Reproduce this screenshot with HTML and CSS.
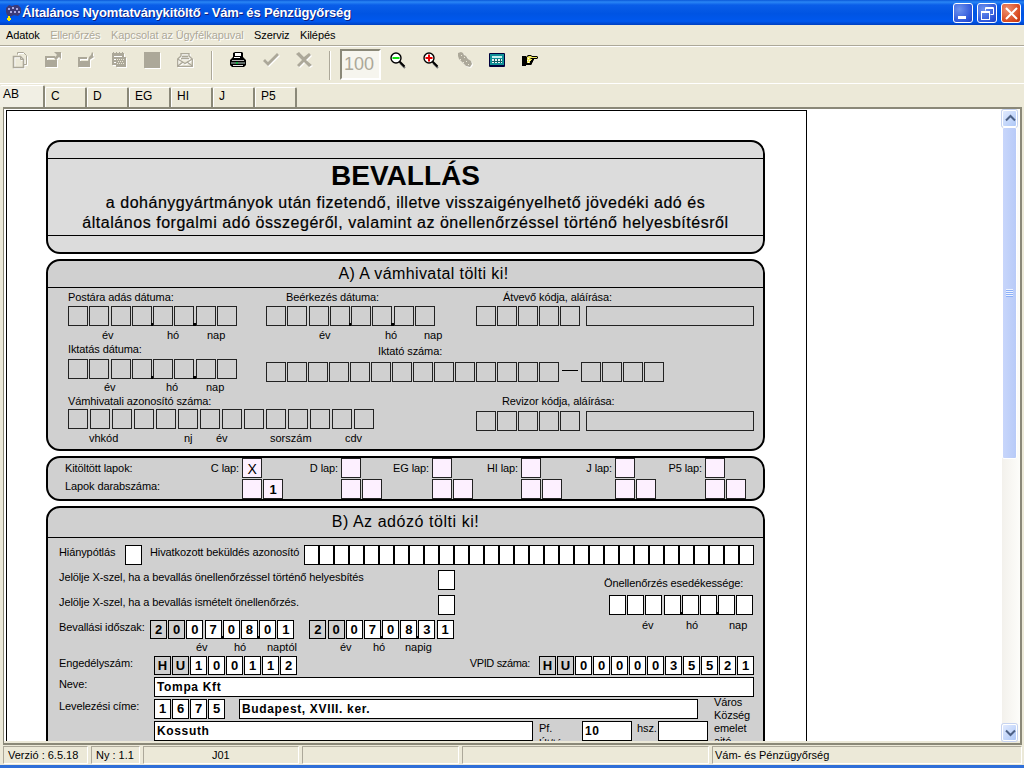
FILE: index.html
```html
<!DOCTYPE html>
<html lang="hu">
<head>
    <meta charset="UTF-8">
    <title>Általános Nyomtatványkitöltő - Vám- és Pénzügyőrség</title>
    <link rel="stylesheet" href="styles.css">
</head>
<body>
<div class="window">

    <!-- Title bar -->
    <div class="titlebar">
        <svg class="app-icon" width="17" height="17" viewBox="0 0 17 17">
            <path d="M1 4 L4 1 L7 2 L10 1 L13 1 L16 4 L16 9 L13 12 L9 11 L5 13 L2 11 L1 8 Z" fill="#3c3a78"/>
            <path d="M3 4h2v2H3zM7 3h2v2H7zM11 4h2v2h-2zM5 7h2v2H5zM9 7h2v2H9zM13 7h2v2h-2z" fill="#a9a8e0"/>
            <path d="M2 14h1v-2h2v2h1v2H5v1H3v-1H2z" fill="#ffe800"/>
        </svg>
        <span class="title-text">Általános Nyomtatványkitöltő - Vám- és Pénzügyőrség</span>
        <div class="win-buttons">
            <div class="win-btn">
                <svg width="19" height="19" viewBox="0 0 19 19"><rect x="4" y="12" width="8" height="3" fill="#fff"/></svg>
            </div>
            <div class="win-btn">
                <svg width="19" height="19" viewBox="0 0 19 19" fill="none" stroke="#fff"><path d="M7.500 6.500V3.500H15.500V10.500H12.500" /><path d="M7.500 4.500H15.500"/><rect x="3.500" y="7.500" width="8" height="8"/><path d="M3.500 8.500H11.500"/></svg>
            </div>
            <div class="win-btn win-close">
                <svg width="19" height="19" viewBox="0 0 19 19" stroke="#fff" stroke-width="2"><path d="M4 4L15 15M15 4L4 15"/></svg>
            </div>
        </div>
    </div>

    <!-- Menu -->
    <div class="menubar">
        <span>Adatok</span>
        <span class="disabled">Ellenőrzés</span>
        <span class="disabled">Kapcsolat az Ügyfélkapuval</span>
        <span>Szerviz</span>
        <span>Kilépés</span>
    </div>

    <!-- Toolbar -->
    <div class="toolbar">
        <div class="tool-group">
            <svg class="tool tool-off" viewBox="0 0 16 16" fill="none" stroke="#aca899"><path d="M5.500 2.500V.5H11.500L14.500 3.500V12.500H11.500"/><path d="M1.500 4.500H8.500L11.500 7.500V15.500H1.500Z" stroke-width="1.600"/><path d="M8.500 4.500V7.500H11.500" /></svg>
            <svg class="tool tool-off" viewBox="0 0 16 16" fill="#aca899"><path d="M0 4h10v2H2v2h8l1-1 1 1v7H0z"/><path d="M9 0h7v7l-2-2-3 3-2-2 3-3z"/></svg>
            <svg class="tool tool-off" viewBox="0 0 16 16" fill="#aca899"><path d="M0 5h9v2H2v2h8l2-2v8H0z"/><path d="M14 0l1 1v3l1 1-3 2-3 2 1-4 2-2z"/></svg>
            <svg class="tool tool-off" viewBox="0 0 16 16" fill="#aca899"><path d="M1 1h1V0h1v1h2V0h1v1h2V0h1v1h2V0h1v1h1v4h2v10H5v-2H1zM3 4v1h8V4zM3 7v1h2V7zM3 10v1h2v-1z" fill-rule="evenodd"/><path d="M6 7h1v1H6zM8 7h1v1H8zM10 7h1v1h-1zM12 7h1v1h-1zM7 9h1v1H7zM9 9h1v1H9zM11 9h1v1h-1zM6 11h1v1H6zM8 11h1v1H8zM10 11h1v1h-1zM12 11h1v1h-1z" fill="#ece9d8"/></svg>
            <svg class="tool tool-off" viewBox="0 0 16 16"><rect width="16" height="16" fill="#aca899"/></svg>
            <svg class="tool tool-off" viewBox="0 0 16 16" fill="none" stroke="#aca899" stroke-width="1.300"><path d="M.7 7L4 4V1.700H12V4L15.300 7V14.300H.7Z"/><path d="M.7 7L8 11.500L15.300 7"/><path d="M.7 14L6 10M15.300 14L10 10"/><path d="M5 4.500H11M4 6.500H12"/></svg>
        </div>
        <div class="tool-sep sep-first"></div>
        <div class="tool-group">
            <svg class="tool" viewBox="0 0 16 16"><path d="M3 1l2-1h7l1 1v4l3 3v5l-2 2H2l-2-2V8l3-3z" fill="#000"/><path d="M5 1h6v3H5zM4 5h6v1H4z" fill="#fff"/><path d="M2 8h12v1H2z" fill="#b8b8b8"/><path d="M1 10h14v2H1z" fill="#5e6a66"/><rect x="6" y="10" width="2" height="2" fill="#10b040"/><path d="M3 13h10v1H3z" fill="#e8e8e8"/></svg>
            <svg class="tool tool-off" viewBox="0 0 16 16" fill="#aca899"><path d="M0 9l2-2 3 3 9-9 2 2L5 14z"/></svg>
            <svg class="tool tool-off" viewBox="0 0 16 16" fill="#aca899"><path d="M0 2l3-2 5 5 5-4 2 2-5 5 6 5-3 2-5-5-5 5-2-2 5-5z"/></svg>
        </div>
        <div class="tool-sep sep-second"></div>
        <div class="zoom-box">100</div>
        <div class="tool-group tools-right">
            <svg class="tool" viewBox="0 0 16 16"><path d="M10 11l5 5" stroke="#777" stroke-width="2"/><path d="M9.500 9.500l5 5" stroke="#000" stroke-width="2"/><circle cx="6" cy="6" r="5" fill="#fff" stroke="#000" stroke-width="1.400"/><rect x="2.500" y="5" width="7" height="2" fill="#10e010"/></svg>
            <svg class="tool" viewBox="0 0 16 16"><path d="M10 11l5 5" stroke="#777" stroke-width="2"/><path d="M9.500 9.500l5 5" stroke="#000" stroke-width="2"/><circle cx="6" cy="6" r="5" fill="#fff" stroke="#000" stroke-width="1.400"/><path d="M5 2.500h2V5h2.500v2H7v2.500H5V7H2.500V5H5z" fill="#e80000"/></svg>
            <svg class="tool tool-off" viewBox="0 0 16 16"><path d="M2 1l3-1 2 1 1 2 2 1 2 3 3 2 1 3-2 3-4-1-2-2-2-2-3-3-1-3z" fill="#aca899"/><path d="M5 3h1v1H5zM8 5h1v1H8zM4 7h1v1H4zM10 9h1v1h-1zM7 10h1v1H7zM12 12h1v1h-1z" fill="#ece9d8"/></svg>
            <svg class="tool" viewBox="0 0 16 16"><rect y="1" width="16" height="14" rx="1" fill="#00003c"/><rect x="1" y="2" width="14" height="11" fill="#0f9098"/><rect x="3" y="4" width="10" height="2" fill="#c8f0f0"/><rect x="3" y="7" width="10" height="4" fill="#e8f4f4"/><path d="M5 7h1v4H5zM8 7h1v4H8zM11 7h1v4h-1zM3 9h10v1H3z" fill="#0f6068"/></svg>
            <svg class="tool" viewBox="0 0 16 16"><path d="M0 4h4v10H0z" fill="#000"/><path d="M4 5l2-2h3l1 1h5l1 1v1l-1 1h-3v1l-1 1v1l-1 1v1l-1 1H4z" fill="#000"/><path d="M5 5l2-1h2l1 1h5v1H9L8 7h2v1H9v1H8v1H8v1H5z" fill="#f0e860"/><path d="M6 6h1v1H6zM5 8h1v1H5zM7 8h1v1H7zM6 10h1v1H6z" fill="#fff"/></svg>
        </div>
    </div>

    <!-- Tabs -->
    <div class="tabs">
        <div class="tab active">AB</div>
        <div class="tab">C</div>
        <div class="tab">D</div>
        <div class="tab">EG</div>
        <div class="tab">HI</div>
        <div class="tab">J</div>
        <div class="tab">P5</div>
    </div>

    <!-- Form area -->
    <div class="main">
        <div class="viewer">
            <div class="sheet">

                <div class="panel panel-title">
                    <div class="title-top"></div>
                    <div class="title-body">
                        <h1>BEVALLÁS</h1>
                        <p>a dohánygyártmányok után fizetendő, illetve visszaigényelhető jövedéki adó és</p>
                        <p>általános forgalmi adó összegéről, valamint az önellenőrzéssel történő helyesbítésről</p>
                    </div>
                    <div class="title-bottom"></div>
                </div>

                <div class="panel panel-a">
                    <div class="panel-head head-a">A) A vámhivatal tölti ki!</div>
                    <div class="a-body">
                        <div class="a-row">
                            <div class="group group-left">
                                <div class="label">Postára adás dátuma:</div>
                                <div class="cells cells-date">
                                    <span class="cell"></span><span class="cell"></span><span class="cell"></span><span class="cell tick"></span><span class="cell"></span><span class="cell tick"></span><span class="cell"></span><span class="cell"></span>
                                </div>
                                <div class="caps caps-post"><span>év</span><span>hó</span><span>nap</span></div>
                            </div>
                            <div class="group group-mid">
                                <div class="label label-beerk">Beérkezés dátuma:</div>
                                <div class="cells cells-date">
                                    <span class="cell"></span><span class="cell"></span><span class="cell"></span><span class="cell tick"></span><span class="cell"></span><span class="cell tick"></span><span class="cell"></span><span class="cell"></span>
                                </div>
                                <div class="caps caps-beerk"><span>év</span><span>hó</span><span>nap</span></div>
                            </div>
                            <div class="group">
                                <div class="label label-atvevo">Átvevő kódja, aláírása:</div>
                                <div class="cells">
                                    <span class="cell"></span><span class="cell"></span><span class="cell"></span><span class="cell"></span><span class="cell"></span>
                                    <span class="long-cell"></span>
                                </div>
                            </div>
                        </div>
                        <div class="a-row">
                            <div class="group group-left">
                                <div class="label">Iktatás dátuma:</div>
                                <div class="cells cells-date cells-iktatas">
                                    <span class="cell"></span><span class="cell"></span><span class="cell"></span><span class="cell tick"></span><span class="cell"></span><span class="cell tick"></span><span class="cell"></span><span class="cell"></span>
                                </div>
                                <div class="caps caps-iktatas"><span>év</span><span>hó</span><span>nap</span></div>
                            </div>
                            <div class="group group-iktato">
                                <div class="label label-iktato">Iktató száma:</div>
                                <div class="cells cells-iktato">
                                    <span class="cell"></span><span class="cell"></span><span class="cell"></span><span class="cell"></span><span class="cell"></span><span class="cell"></span><span class="cell"></span><span class="cell"></span><span class="cell"></span><span class="cell"></span><span class="cell"></span><span class="cell"></span><span class="cell"></span><span class="cell"></span>
                                    <span class="dash"></span>
                                    <span class="cell"></span><span class="cell"></span><span class="cell"></span><span class="cell"></span>
                                </div>
                            </div>
                        </div>
                        <div class="a-row">
                            <div class="group group-wide">
                                <div class="label">Vámhivatali azonosító száma:</div>
                                <div class="cells cells-vam">
                                    <span class="cell"></span><span class="cell"></span><span class="cell"></span><span class="cell"></span><span class="cell"></span><span class="cell"></span><span class="cell"></span><span class="cell"></span><span class="cell"></span><span class="cell"></span><span class="cell"></span><span class="cell"></span><span class="cell"></span><span class="cell"></span>
                                </div>
                                <div class="caps caps-vam"><span>vhkód</span><span>nj</span><span>év</span><span>sorszám</span><span>cdv</span></div>
                            </div>
                            <div class="group">
                                <div class="label label-revizor">Revizor kódja, aláírása:</div>
                                <div class="cells cells-revizor">
                                    <span class="cell"></span><span class="cell"></span><span class="cell"></span><span class="cell"></span><span class="cell"></span>
                                    <span class="long-cell"></span>
                                </div>
                            </div>
                        </div>
                    </div>
                </div>

                <div class="panel panel-lapok">
                    <div class="lap-row lap-row-top">
                        <div class="lap"><span class="lap-first">Kitöltött lapok:</span><span class="lap-name">C lap:</span><span class="cell pink cell-x">X</span></div>
                        <div class="lap"><span class="lap-name">D lap:</span><span class="cell pink"></span></div>
                        <div class="lap"><span class="lap-name">EG lap:</span><span class="cell pink"></span></div>
                        <div class="lap"><span class="lap-name">HI lap:</span><span class="cell pink"></span></div>
                        <div class="lap"><span class="lap-name">J lap:</span><span class="cell pink"></span></div>
                        <div class="lap"><span class="lap-name">P5 lap:</span><span class="cell pink"></span></div>
                    </div>
                    <div class="lap-row lap-row-bottom">
                        <div class="lap-count">Lapok darabszáma:</div>
                        <div class="cells"><span class="cell pink"></span><span class="cell pink-value">1</span></div>
                        <div class="cells"><span class="cell pink"></span><span class="cell pink"></span></div>
                        <div class="cells"><span class="cell pink"></span><span class="cell pink"></span></div>
                        <div class="cells"><span class="cell pink"></span><span class="cell pink"></span></div>
                        <div class="cells"><span class="cell pink"></span><span class="cell pink"></span></div>
                        <div class="cells"><span class="cell pink"></span><span class="cell pink"></span></div>
                    </div>
                </div>

                <div class="panel panel-b">
                    <div class="panel-head head-b">B) Az adózó tölti ki!</div>
                    <div class="b-body">
                        <div class="b-row b-first">
                            <span class="label hianypotlas">Hiánypótlás</span>
                            <span class="box"></span>
                            <span class="label hivatkozott">Hivatkozott beküldés azonosító</span>
                            <div class="ref-cells">
                                <span class="box"></span><span class="box"></span><span class="box"></span><span class="box"></span><span class="box"></span><span class="box"></span><span class="box"></span><span class="box"></span><span class="box"></span><span class="box"></span><span class="box"></span><span class="box"></span><span class="box"></span><span class="box"></span><span class="box"></span><span class="box"></span><span class="box"></span><span class="box"></span><span class="box"></span><span class="box"></span><span class="box"></span><span class="box"></span><span class="box"></span><span class="box"></span><span class="box"></span><span class="box"></span><span class="box"></span><span class="box"></span><span class="box"></span><span class="box"></span>
                            </div>
                        </div>

                        <div class="b-split">
                            <div class="b-left">
                                <div class="check-row"><span class="label check-label">Jelölje X-szel, ha a bevallás önellenőrzéssel történő helyesbítés</span><span class="box"></span></div>
                                <div class="check-row"><span class="label check-label">Jelölje X-szel, ha a bevallás ismételt önellenőrzés.</span><span class="box"></span></div>
                                <div class="b-row">
                                    <span class="label period-label">Bevallási időszak:</span>
                                    <div class="digits digits-wide">
                                        <span class="digit grey">2</span><span class="digit grey">0</span><span class="digit">0</span><span class="digit tick">7</span><span class="digit">0</span><span class="digit tick">8</span><span class="digit">0</span><span class="digit">1</span>
                                    </div>
                                    <div class="digits digits-wide digits-to">
                                        <span class="digit grey">2</span><span class="digit grey">0</span><span class="digit">0</span><span class="digit tick">7</span><span class="digit">0</span><span class="digit tick">8</span><span class="digit">3</span><span class="digit">1</span>
                                    </div>
                                </div>
                                <div class="caps caps-period"><span>év</span><span>hó</span><span>naptól</span><span>év</span><span>hó</span><span>napig</span></div>
                            </div>
                            <div class="b-right">
                                <div class="label">Önellenőrzés esedékessége:</div>
                                <div class="digits digits-wide due-cells">
                                    <span class="box"></span><span class="box"></span><span class="box"></span><span class="box tick"></span><span class="box"></span><span class="box tick"></span><span class="box"></span><span class="box"></span>
                                </div>
                                <div class="caps caps-due"><span>év</span><span>hó</span><span>nap</span></div>
                            </div>
                        </div>

                        <div class="b-row b-engedely">
                            <span class="label field-label">Engedélyszám:</span>
                            <div class="digits">
                                <span class="digit grey">H</span><span class="digit grey">U</span><span class="digit">1</span><span class="digit">0</span><span class="digit">0</span><span class="digit">1</span><span class="digit">1</span><span class="digit">2</span>
                            </div>
                            <span class="label vpid-label">VPID száma:</span>
                            <div class="digits">
                                <span class="digit grey">H</span><span class="digit grey">U</span><span class="digit">0</span><span class="digit">0</span><span class="digit">0</span><span class="digit">0</span><span class="digit">0</span><span class="digit">3</span><span class="digit">5</span><span class="digit">5</span><span class="digit">2</span><span class="digit">1</span>
                            </div>
                        </div>

                        <div class="b-row b-name">
                            <span class="label field-label">Neve:</span>
                            <div class="text-box grow">Tompa Kft</div>
                        </div>

                        <div class="b-address">
                            <div class="address-left">
                                <div class="b-row">
                                    <span class="label field-label">Levelezési címe:</span>
                                    <div class="digits">
                                        <span class="digit digit-high">1</span><span class="digit digit-high">6</span><span class="digit digit-high">7</span><span class="digit digit-high">5</span>
                                    </div>
                                    <div class="text-box city">Budapest, XVIII. ker.</div>
                                </div>
                                <div class="b-row b-street">
                                    <div class="text-box street">Kossuth</div>
                                    <div class="label pf-label">Pf.<br>Út/tér</div>
                                    <div class="text-box number">10</div>
                                    <span class="label hsz-label">hsz.</span>
                                    <div class="text-box hsz"></div>
                                </div>
                            </div>
                            <div class="label address-notes">Város<br>Község<br>emelet<br>ajtó</div>
                        </div>
                    </div>
                </div>

            </div>
        </div>

        <div class="scrollbar">
            <div class="sb-btn">
                <svg width="15" height="15" viewBox="0 0 15 15" fill="none" stroke="#4d6185" stroke-width="2"><path d="M3 9.500L7.500 5L12 9.500"/></svg>
            </div>
            <div class="sb-thumb"><span></span></div>
            <div class="sb-track"></div>
            <div class="sb-btn">
                <svg width="15" height="15" viewBox="0 0 15 15" fill="none" stroke="#4d6185" stroke-width="2"><path d="M3 5.500L7.500 10L12 5.500"/></svg>
            </div>
        </div>
    </div>

    <!-- Status bar -->
    <div class="statusbar">
        <div class="status s-version">Verzió : 6.5.18</div>
        <div class="status s-ny">Ny : 1.1</div>
        <div class="status s-code">J01</div>
        <div class="status s-empty"></div>
        <div class="status s-empty2"></div>
        <div class="status s-office">Vám- és Pénzügyőrség</div>
    </div>
    <div class="taskbar-edge"></div>
</div>
</body>
</html>
```

FILE: styles.css
```css
/* General Reset */
* {
    margin: 0;
    padding: 0;
    box-sizing: border-box;
}

body {
    font-family: "Liberation Sans", Arial, sans-serif;
    font-size: 11px;
    color: #000;
    background: #ece9d8;
    overflow: hidden;
}

.window {
    width: 1024px;
    height: 768px;
    display: flex;
    flex-direction: column;
    background: #ece9d8;
}

/* Title bar */
.titlebar {
    height: 25px;
    display: flex;
    align-items: center;
    padding-left: 5px;
    background: linear-gradient(#0a58d8 0, #2a86f5 8%, #0a5ee8 20%, #0054e3 55%, #0058ee 85%, #0040c0 100%);
}

.app-icon {
    flex: none;
}

.title-text {
    color: #fff;
    font-size: 13px;
    font-weight: 700;
    letter-spacing: -0.15px;
    text-shadow: 1px 1px 0 #0f1f80;
    white-space: nowrap;
}

.win-buttons {
    display: flex;
    gap: 4px;
    margin-left: auto;
    margin-right: 3px;
}

.win-btn {
    width: 20px;
    height: 20px;
    border: 1px solid #fff;
    border-radius: 3px;
    background: radial-gradient(circle at 30% 30%, #6e93ee, #2a52d8 75%, #1d3fc0);
}

.win-btn svg {
    display: block;
}

.win-close {
    background: radial-gradient(circle at 30% 30%, #ee9070, #d8481e 70%, #b8300c);
}

/* Menu */
.menubar {
    height: 20px;
    display: flex;
    align-items: center;
    gap: 10.5px;
    padding-left: 6px;
    letter-spacing: -0.1px;
}

.menubar .disabled {
    color: #aca899;
    text-shadow: 1px 1px 0 #fff;
}

/* Toolbar */
.toolbar {
    height: 38px;
    display: flex;
    border-top: 1px solid #aca899;
    box-shadow: inset 0 1px 0 #fff;
    padding-left: 12px;
}

.tool-group {
    display: flex;
    gap: 17px;
    padding-top: 6px;
}

.tools-right {
    margin-left: 9px;
}

.tool {
    display: block;
    width: 16px;
    height: 16px;
    overflow: visible;
}

.tool-off {
    filter: drop-shadow(1px 1px 0 #fff);
}

.tool-sep {
    width: 2px;
    height: 29px;
    margin-top: 5px;
    border-left: 1px solid #aca899;
    border-right: 1px solid #fff;
}

.sep-first {
    margin-left: 18px;
    margin-right: 17px;
}

.sep-second {
    margin-left: 17px;
    margin-right: 9px;
}

.zoom-box {
    width: 41px;
    height: 31px;
    margin-top: 3px;
    padding: 3px 0 0 2px;
    border: 2px solid;
    border-color: #8a8878 #fff #fff #8a8878;
    background: #f6f5ee;
    color: #aca899;
    font-size: 18px;
    line-height: 21px;
}

/* Tabs */
.tabs {
    height: 24px;
    display: flex;
    align-items: flex-end;
    border-top: 1px solid #fff;
}

.tab {
    width: 42px;
    height: 20px;
    padding: 1px 0 0 5px;
    border-top: 1px solid #fff;
    border-left: 1px solid #fff;
    border-right: 2px solid #8a8878;
    border-radius: 2px 2px 0 0;
    font-size: 12px;
}

.tab.active {
    width: 45px;
    height: 22px;
    padding: 1px 0 0 3px;
    border-left: none;
    background: #f1efe4;
}

/* Form area */
.main {
    height: 638px;
    display: flex;
    margin: 0 2px 0 3px;
    padding-bottom: 2px;
    border-top: 2px solid #8a8878;
    border-left: 1px solid #8a8878;
    border-right: 2px solid #8a8878;
    border-bottom: 2px solid #8a8878;
    box-shadow: inset 0 -2px 0 #ece9d8;
}

.viewer {
    flex: 1;
    overflow: hidden;
    padding: 1px 0 0 2px;
    background: #fff;
}

.sheet {
    width: 801px;
    height: 900px;
    padding: 29px 0 0 39px;
    border: 1px solid #000;
    background: #fff;
    display: flex;
    flex-direction: column;
    gap: 5px;
}

.panel {
    width: 719px;
    flex: none;
    border: 2px solid #000;
    border-radius: 14px;
    background: #d0d0d0;
}

.panel-head {
    height: 27px;
    border-bottom: 1px solid #000;
    text-align: center;
    font-size: 16px;
    letter-spacing: 0.4px;
    line-height: 26px;
}

.head-a {
    padding-left: 36px;
}

/* Title panel */
.panel-title {
    height: 114px;
    background: #dcdcdc;
}

.title-top {
    height: 17px;
    border-bottom: 1px solid #000;
}

.title-body {
    height: 76px;
    text-align: center;
}

.title-body h1 {
    font-size: 28px;
    line-height: 34px;
}

.title-body p {
    font-size: 16px;
    line-height: 20px;
    letter-spacing: 0.53px;
    -webkit-text-stroke: 0.2px #000;
}

.title-bottom {
    height: 17px;
    border-top: 1px solid #000;
}

/* Common form pieces */
.label {
    line-height: 14px;
    letter-spacing: -0.1px;
    white-space: nowrap;
}

.cells {
    display: flex;
    gap: 1px;
}

.cells-date {
    gap: 1.25px;
}

.cell {
    position: relative;
    flex: none;
    width: 20px;
    height: 20px;
    border: 1px solid #222;
    text-align: center;
}

.long-cell {
    width: 168px;
    height: 20px;
    margin-left: 5px;
    border: 1px solid #222;
}

.tick::after {
    content: "";
    position: absolute;
    right: -3px;
    bottom: -1px;
    width: 3px;
    height: 3px;
    background: #000;
}

.caps {
    display: grid;
    line-height: 14px;
}

/* Panel A */
.a-body {
    padding: 2px 0 4px 20px;
}

.a-row {
    display: flex;
}

.group-left {
    width: 198px;
}

.group-mid {
    width: 210px;
}

.group-wide {
    width: 408px;
}

.group .cells {
    margin-top: 2px;
}

.group .caps {
    margin-top: 2px;
}

.label-beerk {
    margin-left: 20px;
}

.label-atvevo {
    margin-left: 27px;
}

.caps-post {
    padding-left: 34px;
    grid-template-columns: 65px 40px 30px;
}

.caps-beerk {
    padding-left: 53px;
    grid-template-columns: 66px 39px 30px;
}

.group .cells-iktatas {
    margin-top: 3px;
}

.group .caps-iktatas {
    margin-top: 1px;
    padding-left: 36px;
    grid-template-columns: 62px 40px 30px;
}

.group-iktato {
    padding-top: 2px;
}

.label-iktato {
    margin-left: 112px;
}

.group .cells-iktato {
    margin-top: 4px;
}

.dash {
    width: 16px;
    height: 1px;
    margin: 8px 2px 0;
    background: #000;
}

.group .cells-vam {
    margin-top: 1px;
}

.cells-vam .cell {
    margin-right: 1px;
}

.group .caps-vam {
    padding-left: 21px;
    grid-template-columns: 95px 32px 54px 75px 30px;
}

.label-revizor {
    margin-left: 26px;
}

.group .cells-revizor {
    margin-top: 3px;
}

/* Sheet counters */
.panel-lapok {
    height: 45px;
    padding-left: 17px;
}

.lap-row {
    display: grid;
    letter-spacing: -0.1px;
}

.lap-row-top {
    grid-template-columns: 197px 99px 91px 89px 94px 90px;
    margin-bottom: 1px;
}

.lap-row-bottom {
    grid-template-columns: 177px 99px 91px 89px 94px 90px 42px;
}

.lap-count {
    padding-top: 1px;
}

.lap {
    display: flex;
    justify-content: flex-end;
    align-items: center;
    gap: 3px;
}

.lap-first {
    margin-right: auto;
}

.pink {
    background: #fdf0ff;
}

.cell-x {
    font-size: 14px;
    line-height: 20px;
}

.pink-value {
    background: #fdf0ff;
    font-size: 13px;
    font-weight: 700;
    line-height: 19px;
}

/* Panel B */
.panel-b {
    height: 320px;
}

.head-b {
    height: 30px;
    letter-spacing: 0.55px;
    line-height: 28px;
}

.b-body {
    padding: 7px 9px 0 11px;
}

.b-row {
    display: flex;
}

.box {
    position: relative;
    flex: none;
    width: 17px;
    height: 20px;
    border: 1px solid #000;
    background: #fff;
}

.hianypotlas {
    width: 66px;
}

.hivatkozott {
    width: 154px;
    margin-left: 8px;
}

.ref-cells {
    display: flex;
}

.ref-cells .box {
    width: 15px;
}

.b-split {
    display: flex;
    margin-top: 5px;
}

.b-left {
    flex: none;
    width: 545px;
}

.check-row {
    height: 25px;
    display: flex;
}

.check-label {
    width: 379px;
}

.period-label {
    width: 91px;
}

.digits {
    display: flex;
    gap: 1px;
}

.digits-wide {
    gap: 1.2px;
}

.digits-to {
    margin-left: 15px;
}

.digit {
    position: relative;
    flex: none;
    width: 17px;
    height: 19px;
    border: 1px solid #000;
    background: #fff;
    text-align: center;
    font-size: 13px;
    font-weight: 700;
    line-height: 18px;
}

.digit.grey {
    background: #d0d0d0;
}

.digit-high {
    height: 20px;
}

.caps-period {
    margin-top: 1px;
    padding-left: 137px;
    grid-template-columns: 38px 33px 73px 33px 32px 40px;
}

.b-right {
    padding-top: 6px;
}

.due-cells {
    margin: 5px 0 0 5px;
}

.caps-due {
    margin-top: 3px;
    padding-left: 38px;
    grid-template-columns: 44px 43px 20px;
}

.b-engedely {
    margin-top: 2px;
}

.field-label {
    width: 95px;
}

.vpid-label {
    margin: 0 9px 0 auto;
    letter-spacing: -0.35px;
}

.b-name {
    margin-top: 2px;
}

.grow {
    flex: 1;
}

.text-box {
    height: 20px;
    padding-left: 2px;
    border: 1px solid #000;
    background: #fff;
    font-size: 12px;
    font-weight: 700;
    letter-spacing: 0.65px;
    line-height: 19px;
}

.b-address {
    display: flex;
    margin-top: 2px;
    height: 60px;
}

.address-left {
    width: 649px;
}

.city {
    width: 459px;
    margin-left: 14px;
}

.b-street {
    margin: 2px 0 0 95px;
}

.street {
    width: 379px;
}

.pf-label {
    width: 43px;
    margin-left: 6px;
    line-height: 15px;
}

.number {
    width: 50px;
}

.hsz-label {
    width: 21px;
    margin-left: 5px;
}

.hsz {
    width: 50px;
}

.address-notes {
    margin: -3px 0 0 6px;
    line-height: 13px;
}

/* Scrollbar */
.scrollbar {
    width: 18px;
    flex: none;
    display: flex;
    flex-direction: column;
    padding: 1px 3px 0 0;
    background: linear-gradient(90deg, #f3f1ec, #fdfdfa);
}

.sb-btn {
    height: 17px;
    flex: none;
    border: 1px solid #fff;
    border-radius: 2px;
    background: linear-gradient(135deg, #e1eafe, #aec8f7);
    box-shadow: 0 0 0 1px #c6d3f0;
}

.sb-btn svg {
    display: block;
}

.sb-thumb {
    height: 332px;
    flex: none;
    display: flex;
    align-items: center;
    justify-content: center;
    border: 1px solid #fff;
    border-radius: 2px;
    background: linear-gradient(90deg, #c8d6fb, #b8cbf8);
}

.sb-thumb span {
    width: 7px;
    height: 8px;
    background: repeating-linear-gradient(#eef3fe 0 1px, #8cb0f8 1px 2px);
}

.sb-track {
    flex: 1;
}

/* Status bar */
.statusbar {
    height: 20px;
    display: flex;
    gap: 3px;
    padding: 1px 2px 1px 3px;
}

.status {
    border: 1px solid;
    border-color: #aca899 #fff #fff #aca899;
    padding-left: 4px;
    line-height: 16px;
    white-space: nowrap;
}

.s-version {
    width: 85px;
}

.s-ny {
    width: 49px;
}

.s-code {
    width: 156px;
    padding-left: 68px;
}

.s-empty {
    width: 157px;
}

.s-empty2 {
    width: 247px;
}

.s-office {
    flex: 1;
    padding-left: 2px;
}

.taskbar-edge {
    height: 3px;
    background: #2f6fd8;
}
```
